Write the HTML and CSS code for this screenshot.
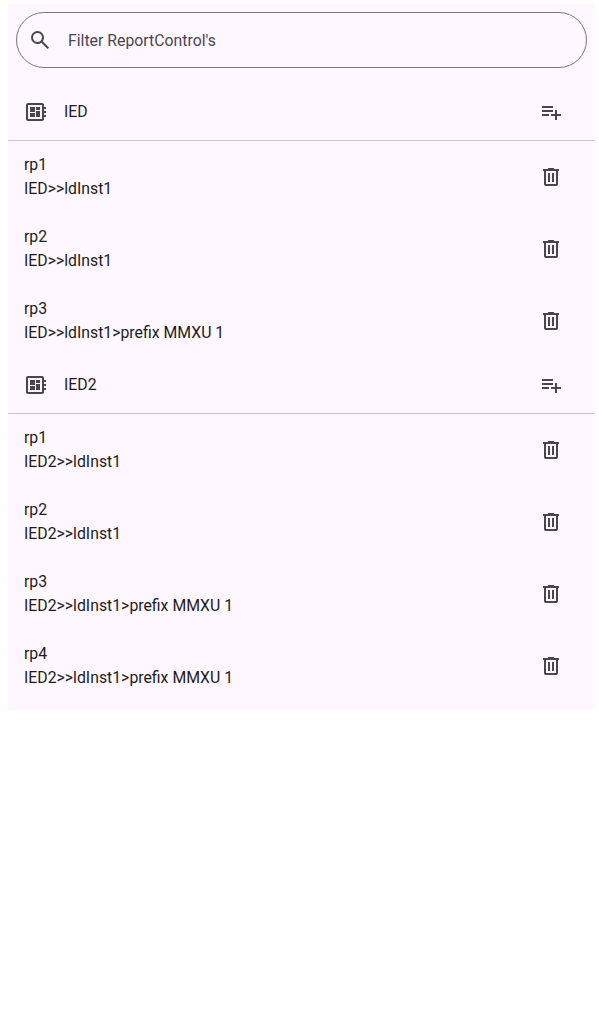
FILE: index.html
```html
<!DOCTYPE html>
<html lang="en">
<head>
<meta charset="utf-8">
<title>Report Controls</title>
<link rel="stylesheet" href="styles.css">
</head>
<body>
<svg class="sprite" aria-hidden="true">
  <symbol id="search" viewBox="0 -960 960 960"><path d="M784-120 532-372q-30 24-69 38t-83 14q-109 0-184.500-75.500T120-580q0-109 75.500-184.500T380-840q109 0 184.500 75.500T640-580q0 44-14 83t-38 69l252 252-56 56ZM380-400q75 0 127.500-52.500T560-580q0-75-52.500-127.500T380-760q-75 0-127.500 52.500T200-580q0 75 52.500 127.500T380-400Z"/></symbol>
  <symbol id="board" viewBox="0 0 24 24"><path d="M22 9V7h-2V5c0-1.100-.9-2-2-2H4c-1.100 0-2 .9-2 2v14c0 1.100.9 2 2 2h14c1.100 0 2-.9 2-2v-2h2v-2h-2v-2h2v-2h-2V9h2zm-4 10H4V5h14v14zM6 13h5v4H6v-4zm6-6h4v3h-4V7zM6 7h5v5H6V7zm6 4h4v6h-4v-6z"/></symbol>
  <symbol id="add" viewBox="0 -960 960 960"><path d="M120-320v-80h280v80H120Zm0-160v-80h440v80H120Zm0-160v-80h440v80H120Zm520 480v-160H480v-80h160v-160h80v160h160v80H720v160h-80Z"/></symbol>
  <symbol id="delete" viewBox="0 -960 960 960"><path d="M280-120q-33 0-56.500-23.500T200-200v-520h-40v-80h200v-40h240v40h200v80h-40v520q0 33-23.500 56.500T680-120H280Zm400-600H280v520h400v-520ZM360-280h80v-360h-80v360Zm160 0h80v-360h-80v360Z"/></symbol>
</svg>
<main class="selection-list">
  <label class="search-field">
    <svg class="icon"><use href="#search"/></svg>
    <input class="search-input" type="text" placeholder="Filter ReportControl's">
  </label>
  <ul class="list">
    <li class="item header"><svg class="icon"><use href="#board"/></svg><span class="text">IED</span><svg class="icon"><use href="#add"/></svg></li>
    <li class="item"><span class="text">rp1<br>IED&gt;&gt;ldInst1</span><svg class="icon"><use href="#delete"/></svg></li>
    <li class="item"><span class="text">rp2<br>IED&gt;&gt;ldInst1</span><svg class="icon"><use href="#delete"/></svg></li>
    <li class="item"><span class="text">rp3<br>IED&gt;&gt;ldInst1&gt;prefix MMXU 1</span><svg class="icon"><use href="#delete"/></svg></li>
    <li class="item header"><svg class="icon"><use href="#board"/></svg><span class="text">IED2</span><svg class="icon"><use href="#add"/></svg></li>
    <li class="item"><span class="text">rp1<br>IED2&gt;&gt;ldInst1</span><svg class="icon"><use href="#delete"/></svg></li>
    <li class="item"><span class="text">rp2<br>IED2&gt;&gt;ldInst1</span><svg class="icon"><use href="#delete"/></svg></li>
    <li class="item"><span class="text">rp3<br>IED2&gt;&gt;ldInst1&gt;prefix MMXU 1</span><svg class="icon"><use href="#delete"/></svg></li>
    <li class="item"><span class="text">rp4<br>IED2&gt;&gt;ldInst1&gt;prefix MMXU 1</span><svg class="icon"><use href="#delete"/></svg></li>
  </ul>
</main>
</body>
</html>
```
FILE: styles.css
```css
body {
  margin: 4px 4px 0 8px;
  background: #fff;
  color: #1d1b20;
  font: 400 15.82px/24px Roboto, sans-serif;
}

.sprite {
  display: none;
}

.selection-list {
  background: #fef7ff;
  padding-top: 8px;
}

.search-field {
  display: flex;
  align-items: center;
  gap: 16px;
  box-sizing: border-box;
  height: 56px;
  margin: 0 8px;
  padding: 0 11px;
  border: 1px solid #79747e;
  border-radius: 28px;
}

.search-input {
  flex: 1;
  min-width: 0;
  padding: 2px 0 0;
  border: 0;
  outline: 0;
  background: transparent;
  color: #1d1b20;
  font: inherit;
}

.search-input::placeholder {
  color: #49454f;
  opacity: 1;
}

.icon {
  flex: none;
  width: 24px;
  height: 24px;
  fill: #49454f;
}

.list {
  margin: 0;
  padding: 16px 0 8px;
  list-style: none;
}

.item {
  display: flex;
  align-items: center;
  gap: 16px;
  box-sizing: border-box;
  height: 72px;
  padding: 0 32px 0 16px;
}

.header {
  height: 57px;
  border-bottom: 1px solid #cac4d0;
}

.text {
  flex: 1;
}
```
